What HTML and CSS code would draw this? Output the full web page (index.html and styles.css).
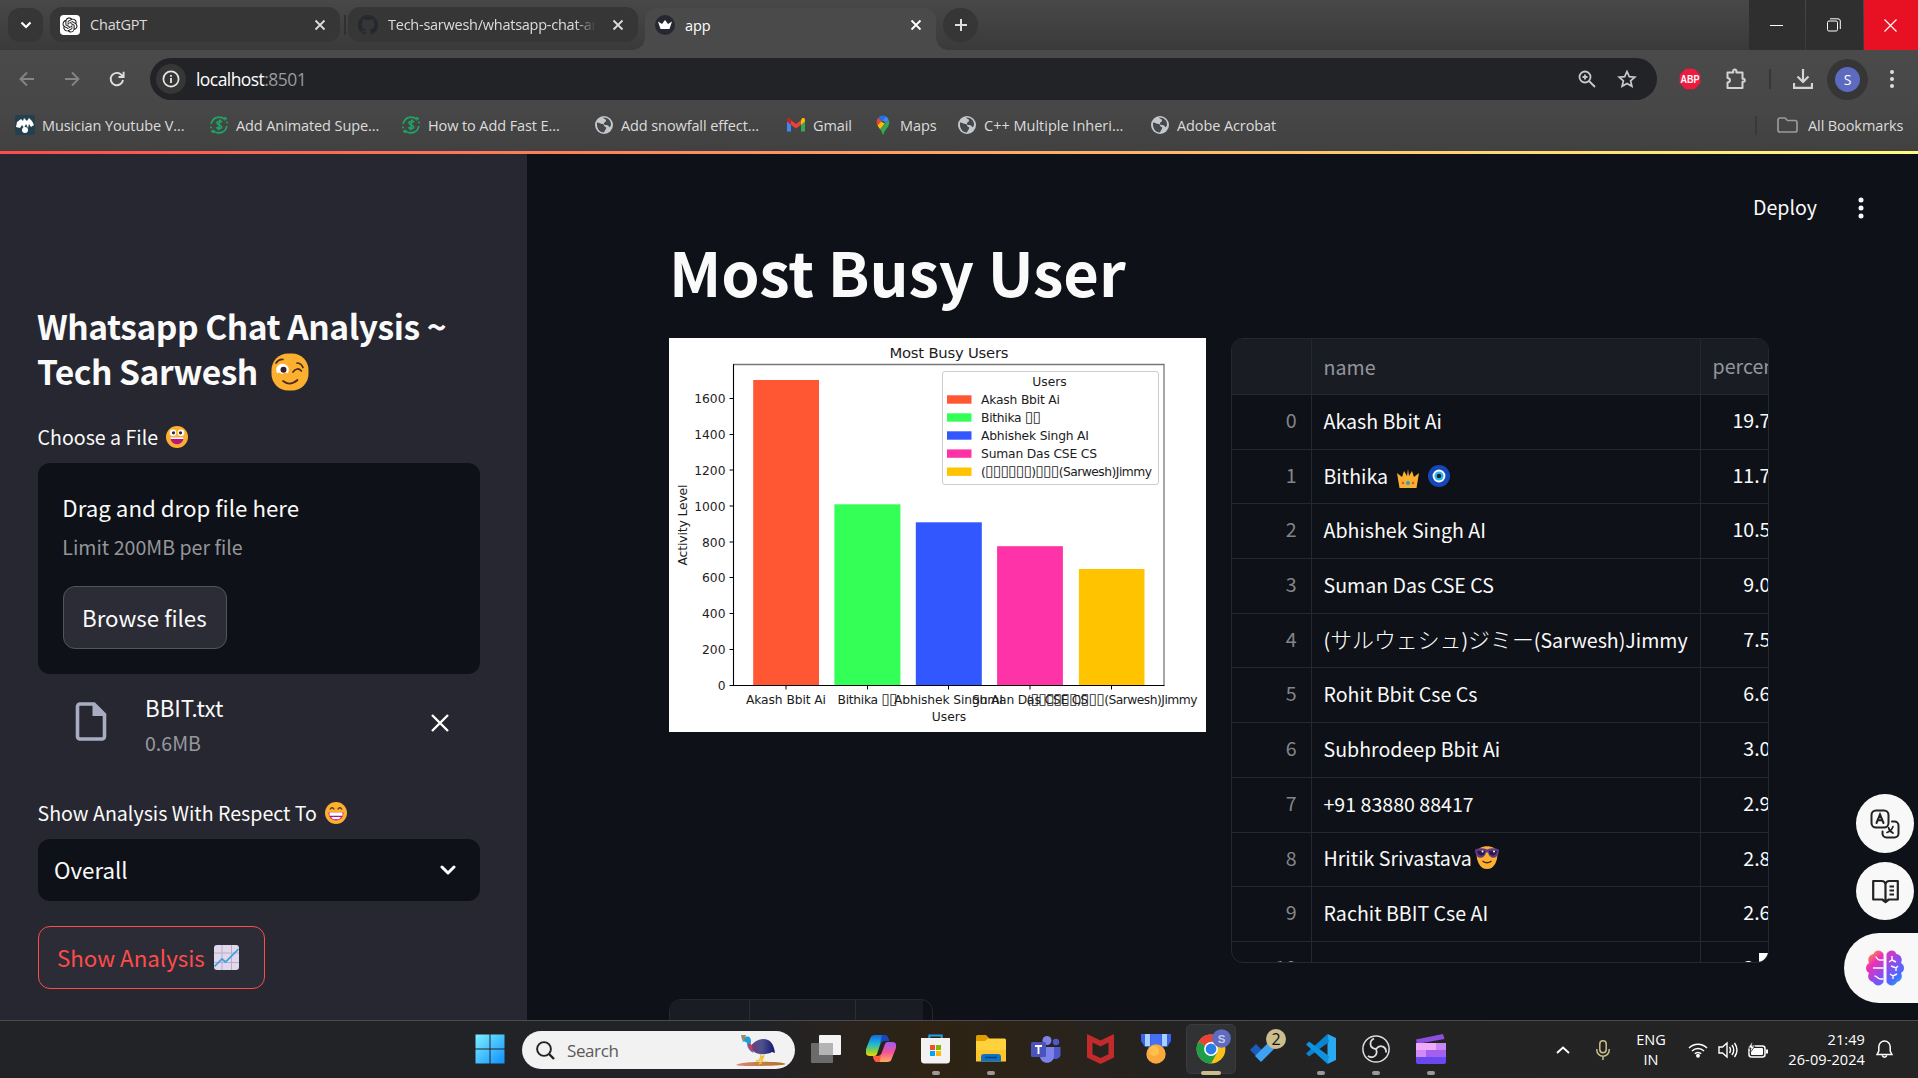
FILE: index.html
```html
<!DOCTYPE html>
<html lang="en">
<head>
<meta charset="utf-8">
<title>app</title>
<link rel="stylesheet" href="styles.css">
</head>
<body>
<svg class="defs" aria-hidden="true">
  <defs>
    <symbol id="i-close" viewBox="0 0 12 12"><path d="M1.5 1.5l9 9M10.5 1.5l-9 9" fill="none" stroke="currentColor" stroke-width="1.8"/></symbol>
    <symbol id="i-globe" viewBox="0 0 20 20"><circle cx="10" cy="10" r="9" fill="#c4c7cc"/><path d="M3 7.5c2.500 0 3.500 1.500 5.500 1.500s1 2.500 3 3-.5 3-1.500 5.500C5 17.500 2.500 13 3 7.500zM9 2.500c1 2 3 1 3 3s-2.500 1.500-2 3.500 4 .5 5 2.500 2-1 2-2.500C17 5 13 2 9 2.500z" fill="#46484a"/></symbol>
    <symbol id="i-seo" viewBox="0 0 20 20"><g fill="none" stroke="#1fa463" stroke-width="1.700"><path d="M15.500 4.200A8 8 0 0 0 2.200 9"/><path d="M4.500 15.800A8 8 0 0 0 17.800 11"/><path d="M13 7.200c-1-1.500-5-1.300-5 .7 0 2.300 4.600 1.800 4.600 4 0 2.200-4.200 2-5.300.4M11 4.500l-1.500 11"/></g><path d="M15 1.500l3.500 2-3 2.500zM5 18.500l-3.500-2 3-2.500z" fill="#1fa463"/><circle cx="18" cy="7.500" r="1" fill="#1fa463"/><circle cx="2" cy="12.500" r="1" fill="#1fa463"/></symbol>
  </defs>
</svg>

<header class="browser">
  <div class="tabstrip">
    <button class="tab-search"><svg width="12" height="8" viewBox="0 0 12 8"><path d="M1.500 1.500L6 6l4.500-4.500" fill="none" stroke="#fff" stroke-width="2.200"/></svg></button>
    <div class="tab">
      <svg class="fav" width="20" height="20" viewBox="-4 -4 32 32"><rect x="-4" y="-4" width="32" height="32" rx="6" fill="#fff"/><path fill="#111" d="M22.2819 9.8211a5.9847 5.9847 0 0 0-.5157-4.9108 6.0462 6.0462 0 0 0-6.5098-2.9A6.0651 6.0651 0 0 0 4.9807 4.1818a5.9847 5.9847 0 0 0-3.9977 2.9 6.0462 6.0462 0 0 0 .7427 7.0966 5.98 5.98 0 0 0 .511 4.9107 6.051 6.051 0 0 0 6.5146 2.9001A5.9847 5.9847 0 0 0 13.2599 24a6.0557 6.0557 0 0 0 5.7718-4.2058 5.9894 5.9894 0 0 0 3.9977-2.9001 6.0557 6.0557 0 0 0-.7475-7.0729zm-9.022 12.6081a4.4755 4.4755 0 0 1-2.8764-1.0408l.1419-.0804 4.7783-2.7582a.7948.7948 0 0 0 .3927-.6813v-6.7369l2.02 1.1686a.071.071 0 0 1 .038.052v5.5826a4.504 4.504 0 0 1-4.4945 4.4944zm-9.6607-4.1254a4.4708 4.4708 0 0 1-.5346-3.0137l.142.0852 4.783 2.7582a.7712.7712 0 0 0 .7806 0l5.8428-3.3685v2.3324a.0804.0804 0 0 1-.0332.0615L9.74 19.9502a4.4992 4.4992 0 0 1-6.1408-1.6464zM2.3408 7.8956a4.485 4.485 0 0 1 2.3655-1.9728V11.6a.7664.7664 0 0 0 .3879.6765l5.8144 3.3543-2.0201 1.1685a.0757.0757 0 0 1-.071 0l-4.8303-2.7865A4.504 4.504 0 0 1 2.3408 7.872zm16.5963 3.8558L13.1038 8.364 15.1192 7.2a.0757.0757 0 0 1 .071 0l4.8303 2.7913a4.4944 4.4944 0 0 1-.6765 8.1042v-5.6772a.79.79 0 0 0-.407-.667zm2.0107-3.0231l-.142-.0852-4.7735-2.7818a.7759.7759 0 0 0-.7854 0L9.409 9.2297V6.8974a.0662.0662 0 0 1 .0284-.0615l4.8303-2.7866a4.4992 4.4992 0 0 1 6.6802 4.66zM8.3065 12.863l-2.02-1.1638a.0804.0804 0 0 1-.038-.0567V6.0742a4.4992 4.4992 0 0 1 7.3757-3.4537l-.142.0805L8.704 5.459a.7948.7948 0 0 0-.3927.6813zm1.0976-2.3654l2.602-1.4998 2.6069 1.4998v2.9994l-2.5974 1.4997-2.6067-1.4997Z"/></svg>
      <span class="t tab-t1">ChatGPT</span>
      <svg class="x" width="12" height="12"><use href="#i-close"/></svg>
    </div>
    <i class="tab-sep"></i>
    <div class="tab tab-gh">
      <svg class="fav" width="20" height="20" viewBox="0 0 16 16"><path fill="#24292f" d="M8 0C3.580 0 0 3.580 0 8c0 3.540 2.290 6.530 5.470 7.590.4.070.55-.17.55-.38v-1.490c-2.010.37-2.530-.49-2.690-.94-.09-.23-.48-.94-.82-1.130-.28-.15-.68-.52-.01-.53.63-.01 1.080.58 1.230.82.72 1.210 1.870.87 2.330.66.070-.52.28-.87.51-1.070-1.780-.2-3.640-.89-3.640-3.950 0-.87.31-1.590.82-2.150-.08-.2-.36-1.020.08-2.120 0 0 .67-.21 2.200.82a7.600 7.600 0 0 1 4 0c1.530-1.040 2.200-.82 2.200-.82.44 1.100.16 1.920.08 2.120.51.56.82 1.270.82 2.150 0 3.070-1.870 3.750-3.650 3.950.29.25.54.73.54 1.480v2.200c0 .21.15.46.55.38A8 8 0 0 0 16 8c0-4.420-3.580-8-8-8z"/></svg>
      <span class="t tab-t2">Tech-sarwesh/whatsapp-chat-analysis</span>
      <svg class="x" width="12" height="12"><use href="#i-close"/></svg>
    </div>
    <div class="tab tab-active">
      <svg class="fav" width="20" height="20" viewBox="0 0 20 20"><circle cx="10" cy="10" r="10" fill="#262730"/><path d="M3 6.500l4 2.500 3-4 3 4 4-2.500-2.500 7.500h-9z" fill="#fff"/></svg>
      <span class="t tab-t3">app</span>
      <svg class="x" width="12" height="12"><use href="#i-close"/></svg>
    </div>
    <button class="tab-new"><svg width="14" height="14" viewBox="0 0 14 14"><path d="M7 1v12M1 7h12" stroke="#dedede" stroke-width="2"/></svg></button>
    <div class="winctl">
      <span><svg width="13" height="13" viewBox="0 0 13 13"><path d="M0 6.500h13" stroke="#fff"/></svg></span>
      <span><svg width="14" height="14" viewBox="0 0 14 14" fill="none" stroke="#fff"><rect x=".5" y="3" width="10" height="10" rx="1.500"/><path d="M3 .8h8A2.300 2.300 0 0 1 13.300 3v8"/></svg></span>
      <span class="close"><svg width="13" height="13" viewBox="0 0 13 13"><path d="M.5.5l12 12M12.500.5l-12 12" stroke="#fff" stroke-width="1.100"/></svg></span>
    </div>
  </div>

  <div class="toolbar">
    <svg class="nav dim" width="16" height="16" viewBox="0 0 16 16"><path d="M15 8H2M8 1.500L1.500 8 8 14.500" fill="none" stroke="currentColor" stroke-width="1.900"/></svg>
    <svg class="nav dim" width="16" height="16" viewBox="0 0 16 16"><path d="M1 8h13M8 1.500L14.500 8 8 14.500" fill="none" stroke="currentColor" stroke-width="1.900"/></svg>
    <svg class="nav" width="16" height="16" viewBox="0 0 16 16"><path d="M14 9a6.200 6.200 0 1 1-1.600-5.200l1.600 1.700M14.600.8v5.200H9.500" fill="none" stroke="#dedede" stroke-width="1.900"/></svg>
    <div class="omnibox">
      <span class="info"><svg width="18" height="18" viewBox="0 0 18 18"><circle cx="9" cy="9" r="7.600" fill="none" stroke="#e6e6e6" stroke-width="1.700"/><path d="M9 8v5M9 5v1.700" stroke="#e6e6e6" stroke-width="1.800"/></svg></span>
      <span class="t url">localhost<em>:8501</em></span>
      <svg class="zoomi" width="18" height="18" viewBox="0 0 18 18" fill="none" stroke="#c9c9c9" stroke-width="1.800"><circle cx="7" cy="7" r="5.500"/><path d="M11 11l6 6M7 4.500v5M4.500 7h5"/></svg>
      <svg width="20" height="20" viewBox="0 0 20 20"><path d="M10 2.500l2.300 5.100 5.500.5-4.200 3.700 1.300 5.500L10 14.400l-4.900 2.900 1.300-5.500-4.200-3.700 5.500-.5z" fill="none" stroke="#c9c9c9" stroke-width="1.700"/></svg>
    </div>
    <div class="ext">
      <svg class="abp" width="22" height="22" viewBox="0 0 22 22"><path d="M6.700.8h8.600l6 6v8.400l-6 6H6.700l-6-6V6.800z" fill="#f0193f"/><text x="11" y="14.800" text-anchor="middle" textLength="19" lengthAdjust="spacingAndGlyphs">ABP</text></svg>
      <svg class="puz" width="22" height="22" viewBox="0 0 22 22"><path d="M2.500 4.500h5.700V3a1.600 1.600 0 0 1 3.200 0v1.500h6.100v6.200h.8a1.500 1.500 0 0 1 0 3h-.8v6.300h-15v-5.500c3.300-.3 3.300-4.200 0-4.500z" fill="none" stroke="#d4d4d4" stroke-width="2" stroke-linejoin="round"/></svg>
      <i class="tb-sep"></i>
      <svg class="dl" width="20" height="20" viewBox="0 0 20 20"><path d="M10 0v12M4.500 7.500L10 13l5.500-5.500M1 14v4.800h18V14" fill="none" stroke="#d4d4d4" stroke-width="2.200"/></svg>
      <span class="avatar"><b>S</b></span>
      <svg class="menu" width="4" height="18" viewBox="0 0 4 18" fill="#dedede"><circle cx="2" cy="2" r="2"/><circle cx="2" cy="9" r="2"/><circle cx="2" cy="16" r="2"/></svg>
    </div>
  </div>

  <nav class="bookmarks">
    <div class="bm"><svg width="20" height="20" viewBox="0 0 20 20"><rect width="20" height="20" rx="2" fill="#23404f"/><path d="M1 12l1-5 4-3 2 2 1-3 3 3 2-3 3 3 2 4-3 2-2-3-1 4-2-4-2 4-2-3-2 3z" fill="#fff"/><circle cx="10" cy="15" r="3" fill="#fff"/></svg><span class="t">Musician Youtube V...</span></div>
    <div class="bm"><svg width="20" height="20"><use href="#i-seo"/></svg><span class="t">Add Animated Supe...</span></div>
    <div class="bm"><svg width="20" height="20"><use href="#i-seo"/></svg><span class="t">How to Add Fast E...</span></div>
    <div class="bm"><svg width="20" height="20"><use href="#i-globe"/></svg><span class="t">Add snowfall effect...</span></div>
    <div class="bm"><svg width="20" height="20" viewBox="0 0 20 20"><path d="M1 5v11.500h4V9.500L1 6z" fill="#4285f4"/><path d="M19 5v11.500h-4V9.500l4-3.500z" fill="#34a853"/><path d="M15 5.300V9.700L19 6.500V5c0-2-2-2.500-3.200-1.500z" fill="#fbbc04"/><path d="M5 9.700V5.300l5 3.800 5-3.800v4.400l-5 3.800z" fill="#ea4335"/><path d="M1 5v1.500l4 3.200V5.300L4.200 3.500C3 2.500 1 3 1 5z" fill="#c5221f"/></svg><span class="t">Gmail</span></div>
    <div class="bm"><svg width="20" height="20" viewBox="0 0 20 20"><path d="M10 .5a6.300 6.300 0 0 0-5 2.400l4 3.300 4-4.900a6.500 6.500 0 0 0-3-.8z" fill="#1a73e8"/><path d="M5 2.900c-2 2.400-1.500 5.800-.4 7.700L9 6.200z" fill="#ea4335"/><path d="M13 1.300L8.500 6.700a2.300 2.300 0 0 1 3.200 3.300l4-4.800A6.200 6.200 0 0 0 13 1.300z" fill="#4285f4"/><path d="M4.600 10.600c.7 1.400 1.700 2.500 2.600 3.700L12 8.500 8 6.800z" fill="#fbbc04"/><path d="M15.700 5.200L7.200 14.300c1.200 1.700 1.900 2.900 2.200 4.600.2.900 1 .9 1.200 0 .8-4.200 5.700-6 5.700-12.200 0-.5-.3-1-.6-1.500z" fill="#34a853"/></svg><span class="t">Maps</span></div>
    <div class="bm bm-wide"><svg width="20" height="20"><use href="#i-globe"/></svg><span class="t">C++ Multiple Inheri...</span></div>
    <div class="bm"><svg width="20" height="20"><use href="#i-globe"/></svg><span class="t">Adobe Acrobat</span></div>
    <i class="bm-sep"></i>
    <div class="bm all"><svg width="21" height="16" viewBox="0 0 21 16"><path d="M1 3a2 2 0 0 1 2-2h5l2.500 2.500H18a2 2 0 0 1 2 2V13a2 2 0 0 1-2 2H3a2 2 0 0 1-2-2z" fill="none" stroke="#9a9a9a" stroke-width="1.700"/></svg><span class="t">All Bookmarks</span></div>
  </nav>
</header>

<div class="decoration"></div>

<div class="app">
  <aside class="sidebar">
    <h2><span class="t h2a">Whatsapp Chat Analysis ~</span><br><span class="t h2b">Tech Sarwesh</span>
      <svg class="emo-title" width="38" height="38" viewBox="0 0 38 38"><rect x=".5" y=".5" width="37" height="37" rx="16.500" fill="#fdb02f"/><circle cx="11.500" cy="17" r="6.300" fill="#fff"/><path d="M5 21l3-1.500 3 1.500 3-1.500 4 1v4H5z" fill="#fdb02f"/><circle cx="12.500" cy="16.800" r="3" fill="#3b1f2b"/><path d="M5 10q3-4 7-3.500M26 10q4 0 6 4.500M22 19q4-5.500 8.500-1M12 28q7 5.500 14.500-1" fill="none" stroke="#4a2a20" stroke-width="1.700" stroke-linecap="round"/></svg></h2>
    <label class="lbl"><span class="t">Choose a File</span>
      <svg width="22" height="22" viewBox="0 0 22 22"><circle cx="11" cy="11" r="11" fill="#fdb02f"/><circle cx="7" cy="6.800" r="3.300" fill="#fff"/><circle cx="15" cy="6.800" r="3.300" fill="#fff"/><circle cx="7.500" cy="6.800" r="1.600" fill="#3b1f2b"/><circle cx="14.500" cy="6.800" r="1.600" fill="#3b1f2b"/><path d="M4.500 11.500h13c0 9-13 9-13 0z" fill="#b8157e"/><path d="M4.500 11.300h13v1.700h-13z" fill="#fff"/></svg></label>
    <section class="dropzone">
      <p class="dz-main"><span class="t">Drag and drop file here</span></p>
      <p class="dz-sub"><span class="t">Limit 200MB per file</span></p>
      <button class="btn browse"><span class="t">Browse files</span></button>
    </section>
    <div class="file">
      <svg class="file-ico" width="32" height="39" viewBox="0 0 32 39"><path d="M2.500 4.500a2.500 2.500 0 0 1 2.500-2.500h14l10.500 10.500v22A2.500 2.500 0 0 1 27 37H5a2.500 2.500 0 0 1-2.500-2.500z" fill="none" stroke="#a9adc1" stroke-width="3.600"/><path d="M17.500 2v12h12z" fill="#a9adc1"/></svg>
      <div class="file-meta"><p class="f1"><span class="t">BBIT.txt</span></p><p class="f2"><span class="t">0.6MB</span></p></div>
      <svg class="file-x" width="18" height="18" viewBox="0 0 18 18"><path d="M1 1l16 16M17 1L1 17" stroke="#fff" stroke-width="2.400"/></svg>
    </div>
    <label class="lbl lbl2"><span class="t">Show Analysis With Respect To</span>
      <svg width="22" height="22" viewBox="0 0 22 22"><circle cx="11" cy="11" r="11" fill="#fdb02f"/><path d="M5 7.500q2-3.500 4.300 0M12.700 7.500q2-3.500 4.300 0" fill="none" stroke="#5b3420" stroke-width="1.300"/><path d="M3.500 10.500h15c0 10.500-15 10.500-15 0z" fill="#b8157e"/><path d="M4.500 10.500h13v3.200h-13zM6 15h10l-2 2.300H8z" fill="#fff"/></svg></label>
    <div class="select"><span class="t">Overall</span><svg width="16" height="11" viewBox="0 0 16 11"><path d="M2 2l6 6 6-6" fill="none" stroke="#fff" stroke-width="3" stroke-linecap="round" stroke-linejoin="round"/></svg></div>
    <button class="btn show"><span class="t">Show Analysis</span>
      <svg width="25" height="25" viewBox="0 0 25 25"><rect width="25" height="25" rx="3" fill="#e1d8ec"/><path d="M8 0v25M17.500 0v25M0 8h25M0 17.500h25" stroke="#b9adc8" stroke-width="1"/><path d="M.5 21.500L8 14l3.500 3L24.500 4" fill="none" stroke="#3f9fe0" stroke-width="1.700"/></svg></button>
  </aside>

  <main class="main">
    <div class="topbar"><span class="t">Deploy</span><svg width="6" height="22" viewBox="0 0 6 22" fill="#fafafa"><circle cx="3" cy="3" r="2.500"/><circle cx="3" cy="11" r="2.500"/><circle cx="3" cy="19" r="2.500"/></svg></div>
    <h1><span class="t">Most Busy User</span></h1>
    <div class="cols">
      <svg class="chart" width="537" height="394" viewBox="0 0 537 394">
        <rect width="537" height="394" fill="#fff"/>
        <text class="ct" x="280" y="20" text-anchor="middle" textLength="119">Most Busy Users</text>
        <g stroke="#000" stroke-width="1"><path d="M60.500 347.500h4M60.500 311.500h4M60.500 275.500h4M60.500 239.500h4M60.500 204h4M60.500 168h4M60.500 132h4M60.500 96.500h4M60.500 60.500h4"/><path d="M117 347.500v4M198.500 347.500v4M279.500 347.500v4M361 347.500v4M442.500 347.500v4"/></g>
        <rect x="84.200" y="42" width="65.800" height="305.500" fill="#ff5733"/>
        <rect x="165.400" y="166.300" width="66" height="181.200" fill="#33ff57"/>
        <rect x="246.800" y="184.300" width="66" height="163.200" fill="#3357ff"/>
        <rect x="328.100" y="208.200" width="65.800" height="139.300" fill="#ff33a8"/>
        <rect x="409.900" y="231" width="65.600" height="116.500" fill="#ffc300"/>
        <path d="M64.500 26.500h430.500v321" fill="none" stroke="#777" stroke-width="1.300"/><path d="M64.500 26v321.500H495.500" fill="none" stroke="#000" stroke-width="1.100"/>
        <g text-anchor="end"><text x="56.500" y="352">0</text><text x="56.500" y="316">200</text><text x="56.500" y="280">400</text><text x="56.500" y="244">600</text><text x="56.500" y="208.500">800</text><text x="56.500" y="172.500">1000</text><text x="56.500" y="136.500">1200</text><text x="56.500" y="101">1400</text><text x="56.500" y="65">1600</text></g>
        <g text-anchor="middle">
          <text x="117" y="366" textLength="80">Akash Bbit Ai</text>
          <text x="198.500" y="366" textLength="60">Bithika <tspan class="tofu">▯▯</tspan></text>
          <text x="279.500" y="366" textLength="109">Abhishek Singh AI</text>
          <text x="361" y="366" textLength="116">Suman Das CSE CS</text>
          <text x="443" y="366" textLength="171">(<tspan class="tofu">▯▯▯▯▯▯</tspan>)<tspan class="tofu">▯▯▯</tspan>(Sarwesh)Jimmy</text>
          <text x="280" y="383">Users</text>
          <text transform="translate(18 187) rotate(-90)" textLength="81">Activity Level</text>
        </g>
        <rect x="273.500" y="33.500" width="216" height="113" rx="2.500" fill="#fff" fill-opacity=".8" stroke="#ccc"/>
        <text x="380.500" y="48" text-anchor="middle">Users</text>
        <rect x="278" y="57.300" width="24.500" height="8.400" fill="#ff5733"/><rect x="278" y="75.300" width="24.500" height="8.400" fill="#33ff57"/><rect x="278" y="93.300" width="24.500" height="8.400" fill="#3357ff"/><rect x="278" y="111.400" width="24.500" height="8.400" fill="#ff33a8"/><rect x="278" y="129.500" width="24.500" height="8.400" fill="#ffc300"/>
        <text x="312" y="66" textLength="79">Akash Bbit Ai</text><text x="312" y="84" textLength="60">Bithika <tspan class="tofu">▯▯</tspan></text><text x="312" y="102" textLength="108">Abhishek Singh AI</text><text x="312" y="120" textLength="116">Suman Das CSE CS</text><text x="312" y="138" textLength="171">(<tspan class="tofu">▯▯▯▯▯▯</tspan>)<tspan class="tofu">▯▯▯</tspan>(Sarwesh)Jimmy</text>
      </svg>

      <div class="df">
        <div class="row head"><span></span><span><b class="t">name</b></span><span>percentage</span></div>
        <div class="row"><span>0</span><span><b class="t">Akash Bbit Ai</b></span><span>19.7</span></div>
        <div class="row"><span>1</span><span>Bithika
          <svg class="crown" width="22" height="20" viewBox="0 0 22 20"><path d="M0 5l5 4 2-6 3 5 1-7 1 7 3-5 2 6 5-4-2.500 15h-17z" fill="#fdb02f"/><circle cx="11" cy="15" r="2" fill="#1aa7c8"/><circle cx="6" cy="15" r="1.300" fill="#e0503a"/><circle cx="16" cy="15" r="1.300" fill="#e0503a"/></svg>
          <svg class="nazar" width="22" height="22" viewBox="0 0 22 22"><circle cx="11" cy="11" r="11" fill="#1546ba"/><circle cx="11" cy="11" r="6.400" fill="#fff"/><circle cx="11" cy="11" r="4.600" fill="#26b6ef"/><circle cx="11" cy="11" r="2.300" fill="#222"/></svg></span><span>11.7</span></div>
        <div class="row"><span>2</span><span><b class="t">Abhishek Singh AI</b></span><span>10.5</span></div>
        <div class="row"><span>3</span><span><b class="t">Suman Das CSE CS</b></span><span>9.0</span></div>
        <div class="row"><span>4</span><span><b class="t">(<i class="jp">サルウェシュ</i>)<i class="jp">ジミー</i>(Sarwesh)Jimmy</b></span><span>7.5</span></div>
        <div class="row"><span>5</span><span><b class="t">Rohit Bbit Cse Cs</b></span><span>6.6</span></div>
        <div class="row"><span>6</span><span><b class="t">Subhrodeep Bbit Ai</b></span><span>3.0</span></div>
        <div class="row"><span>7</span><span><b class="t">+91 83880 88417</b></span><span>2.9</span></div>
        <div class="row"><span>8</span><span><b class="t">Hritik Srivastava</b><svg class="cool" width="24" height="23" viewBox="0 0 24 23"><path d="M1.500 7C2-2 22-2 22.500 7c0 8-3 16-10.500 16S1.500 15 1.500 7z" fill="#fdb02f"/><path d="M0 3.500q6-2.500 12 0 6-2.500 12 0c0 11-10 10-11 3h-2c-1 7-11 8-11-3z" fill="#5b3a86"/><path d="M2 5h8c0 6-7 6-8 0zM14 5h8c-1 6-8 6-8 0z" fill="#2c1745"/><circle cx="7.500" cy="5.500" r="1" fill="#fff"/><circle cx="19" cy="5.500" r="1" fill="#fff"/><path d="M7.500 15q4.500 3.500 9 0" fill="none" stroke="#4a2a20" stroke-width="1.400"/></svg></span><span>2.8</span></div>
        <div class="row"><span>9</span><span><b class="t">Rachit BBIT Cse AI</b></span><span>2.6</span></div>
        <div class="row"><span>10</span><span>+91 89710 45890</span><span>2.5</span></div>
        <i class="corner"></i>
      </div>
    </div>
    <div class="df2"><span></span><span></span><span></span></div>
  </main>

  <div class="float f-tr"><svg width="30" height="30" viewBox="0 0 30 30" fill="none" stroke="#222" stroke-width="2" stroke-linecap="round"><rect x="1.500" y="1.500" width="17" height="17" rx="4.500"/><path d="M6.500 14l3.500-8.500L13.500 14M7.500 11.300h5M22 12.500h2.500a4 4 0 0 1 4 4v8a4 4 0 0 1-4 4h-8a4 4 0 0 1-4-4V22.500"/><path d="M17 23.500c3-1 5-3 6-6M18.500 18.500c.5 2.500 2.500 4.500 4.500 5.500" stroke-width="1.700"/></svg></div>
  <div class="float f-bk"><svg width="27" height="25" viewBox="0 0 27 25" fill="none" stroke="#222" stroke-width="2.200" stroke-linejoin="round"><path d="M1.200 2h8.300a4 4 0 0 1 4 3 4 4 0 0 1 4-3h8.300v18.500h-9l-3.300 2.500-3.300-2.500h-9zM13.500 5v18M17.500 7.500h4.500M17.500 11.500h4.500M17.500 15.500h4.500"/></svg></div>
  <div class="float f-br"><svg width="38" height="36" viewBox="0 0 38 36"><defs><linearGradient id="br" x1="0" y1="0" x2="1" y2="1"><stop offset=".05" stop-color="#ff9d2a"/><stop offset=".28" stop-color="#ee2fb8"/><stop offset=".55" stop-color="#8a4df0"/><stop offset=".8" stop-color="#4570ff"/><stop offset="1" stop-color="#1fc4ff"/></linearGradient></defs><path d="M17.500 4v28c-2 4-8 5-10.500 0C2.500 31 1 26.500 3 23c-4-2-4-8 0-10C1 8.500 3.500 4.500 7.500 4c2-5 8-4.500 10 0zM20.500 4v28c2 4 8 5 10.500 0 4.500-1 6-5.500 4-9 4-2 4-8 0-10 2-4.500-.5-8.500-4.500-9-2-5-8-4.500-10 0z" fill="url(#br)"/><path d="M17.500 10h-4c-3 0-2-3-4-3M17.500 18H7M17.500 29h-3c-3 0-3-3-6-3M26 6v4l-3 2M26 10l4 2M25 16l5 2 2-2M30 18v3M24 24l3 2 4-2M27 26v3" fill="none" stroke="#fff" stroke-width="1.400"/></svg></div>
</div>

<footer class="taskbar">
  <div class="slot"><svg width="30" height="30" viewBox="0 0 30 30"><defs><linearGradient id="wg" x1="0" y1="0" x2="1" y2="1"><stop offset="0" stop-color="#7df0ff"/><stop offset="1" stop-color="#0f8fff"/></linearGradient></defs><path d="M.5.5h14v14H.5zM15.500.5h14v14h-14zM.5 15.500h14v14H.5zM15.500 15.500h14v14h-14z" fill="url(#wg)"/></svg></div>
  <div class="search">
    <svg width="19" height="19" viewBox="0 0 19 19"><circle cx="8" cy="8" r="6.900" fill="none" stroke="#222" stroke-width="1.900"/><path d="M13 13l5 5" stroke="#222" stroke-width="2.400"/></svg>
    <span class="t srch">Search</span>
    <svg class="bird" width="51" height="32" viewBox="0 0 51 32"><defs><linearGradient id="sand" x1="0" x2="1"><stop offset="0" stop-color="#d58a73"/><stop offset="1" stop-color="#b3701f"/></linearGradient><linearGradient id="bd" x1="0" x2="1"><stop offset="0" stop-color="#7a3a6e"/><stop offset=".5" stop-color="#4b5190"/><stop offset="1" stop-color="#17166a"/></linearGradient></defs><path d="M1 30c6-4 44-4 50-1-2 2-46 3-50 1z" fill="url(#sand)"/><path d="M26 20l-1 5-4 1M29 20l-3 8-2 1M27 21v6" stroke="#f2c230" stroke-width="1.500" fill="none"/><path d="M14 10c3 3 3-5 14-6 8 0 11 6 12 14l-3-1c-5 3-19 5-23-7z" fill="url(#bd)"/><path d="M9 3c4-3 7-1 7 3 0 3-1 4 0 6 1 3 2 5 3 6-5-2-7-6-7-10-1-1-3-2-5-1z" fill="#1c9fd4"/><path d="M13 8c0 4 2 8 5 9l-1-7z" fill="#c83a6a"/><path d="M6 0h5l-1 4-3 1z" fill="#a48860"/></svg>
  </div>
  <div class="slot"><svg width="30" height="28" viewBox="0 0 30 28"><rect x="8" width="22" height="20" rx="1" fill="#f4f4f4"/><rect y="8" width="22" height="20" rx="1" fill="#6b6b6b"/><path d="M8 8h14v12H8z" fill="#b4b4b4"/></svg></div>
  <div class="slot"><svg width="30" height="28" viewBox="0 0 30 28"><defs><linearGradient id="c1" x1="0" y1="0" x2="0" y2="1"><stop offset="0" stop-color="#1a66e0"/><stop offset=".4" stop-color="#19b5d8"/><stop offset=".75" stop-color="#7ed04a"/><stop offset="1" stop-color="#ffd000"/></linearGradient><linearGradient id="c2" x1="0" y1="0" x2="0" y2="1"><stop offset="0" stop-color="#a15cf5"/><stop offset=".5" stop-color="#f0529a"/><stop offset="1" stop-color="#ffad5c"/></linearGradient></defs><path d="M9 0h9c3 0 4 2 5 6h-5c-2 0-3 1-4 4l-3 9c-1 2-2 2-4 2H4c-4 0-5-3-4-7L4 4c1-3 2-4 5-4z" fill="url(#c1)"/><path d="M16 0h2c3 0 4 2 5 6h-5c-2 0-3 1-4 3z" fill="#1747c0"/><path d="M21 27h-9c-3 0-4-2-5-6h5c2 0 3-1 4-4l3-8c1-2 2-2 4-2h3c4 0 5 3 4 6l-4 10c-1 3-2 4-5 4z" fill="url(#c2)"/><path d="M14 27h-2c-3 0-4-2-5-6h5c1 0 2 0 3-2z" fill="#ff5a3c"/></svg></div>
  <div class="slot run"><svg width="29" height="30" viewBox="0 0 29 30"><path d="M8.300 5V1.500h12.400V5" fill="none" stroke="#1ca3ec" stroke-width="2"/><path d="M0 4h29v22a3.500 3.500 0 0 1-3.500 3.500h-22A3.500 3.500 0 0 1 0 26z" fill="#f2f2f2"/><path d="M9 11h5v5H9z" fill="#f25022"/><path d="M15 11h5v5h-5z" fill="#7fba00"/><path d="M9 17h5v5H9z" fill="#00a4ef"/><path d="M15 17h5v5h-5z" fill="#ffb900"/></svg></div>
  <div class="slot run"><svg width="30" height="28" viewBox="0 0 30 28"><path d="M0 1.500A1.500 1.500 0 0 1 1.500 0H10l3 3v3H0z" fill="#e19d00"/><path d="M0 6h9l3-2.500h16.500A1.500 1.500 0 0 1 30 5v21H0z" fill="#ffd23d"/><path d="M0 15h30v11.500H0z" fill="#fdc62c"/><path d="M5 26.500V22a3 3 0 0 1 3-3h14a3 3 0 0 1 3 3v4.500z" fill="#0c72c6"/><path d="M9 22.500h12" stroke="#053f7a" stroke-width="1.500"/></svg></div>
  <div class="slot"><svg width="30" height="27" viewBox="0 0 30 27"><circle cx="16" cy="4.500" r="4.500" fill="#7b83eb"/><circle cx="25" cy="6" r="3.200" fill="#5059c9"/><path d="M20 11h9.500v8a5 5 0 0 1-8 3z" fill="#5059c9"/><path d="M9 11h14v9c0 9-14 9-14 0z" fill="#7b83eb"/><rect y="6" width="15" height="15" rx="1.500" fill="#4b53bc"/><path d="M4 10h7M7.500 10v8" stroke="#fff" stroke-width="1.900"/></svg></div>
  <div class="slot"><svg width="27" height="30" viewBox="0 0 27 30"><path d="M0 0l13.500 6.500L27 0v23.500L13.500 30 0 23.500zM5.500 8.500v11.700l8 3.900 8-3.900V8.500l-8 4z" fill="#c32a2c" fill-rule="evenodd"/></svg></div>
  <div class="slot"><svg width="30" height="30" viewBox="0 0 30 30"><path d="M0 0h30v7l-4 6H4L0 7z" fill="#3b62e8"/><path d="M4 0h5v12H4zM21 0h5v12h-5z" fill="#a9d0ff"/><path d="M10 0h10v12H10z" fill="#4470f5"/><circle cx="15" cy="20" r="9.700" fill="#fba93c"/><circle cx="13" cy="17" r="5" fill="#ffc04e"/></svg></div>
  <div class="slot tile"><svg width="50" height="50" viewBox="0 0 50 50"><circle cx="25" cy="25" r="15" fill="#fbc116"/><path d="M25 25L12 17.500A15 15 0 0 1 38 17.500H25z" fill="#ea4335"/><path d="M12 17.500A15 15 0 0 0 25 40l6.500-11.300L25 25z" fill="#1e9e48"/><circle cx="25" cy="25" r="7.200" fill="#fff"/><circle cx="25" cy="25" r="5.600" fill="#2b7de9"/><circle cx="36" cy="14" r="9.700" fill="#5f6bc0"/><text x="36" y="18.500" text-anchor="middle" class="badge-s">S</text></svg></div>
  <div class="slot"><svg class="todo" width="38" height="34" viewBox="0 0 38 34"><path d="M1 21l6-6 7 7-6 6z" fill="#1b5dbf"/><path d="M6 27L23 10l6 6-17 17z" fill="#3fa2f0"/><circle cx="27" cy="10" r="10" fill="#cbbd8e"/><text x="27" y="16" text-anchor="middle" class="badge-2">2</text></svg></div>
  <div class="slot run"><svg width="30" height="30" viewBox="0 0 30 30"><path d="M21.500 0L30 4v22l-8.500 4z" fill="#29a9f2"/><path d="M21.500 0L0 19.500l3 3L23 8z" fill="#0a85d1"/><path d="M21.500 30L0 10.500l3-3L23 22z" fill="#0f93e0"/></svg></div>
  <div class="slot run"><svg width="28" height="28" viewBox="0 0 28 28"><circle cx="14" cy="14" r="13.100" fill="#1a191b" stroke="#ddd" stroke-width="1.500"/><g fill="none" stroke="#ddd" stroke-width="1.800"><path d="M14 14C7 13 7 6 12 3.500"/><path d="M14 14C7 13 7 6 12 3.500" transform="rotate(120 14 14)"/><path d="M14 14C7 13 7 6 12 3.500" transform="rotate(240 14 14)"/></g></svg></div>
  <div class="slot run"><svg width="30" height="30" viewBox="0 0 30 30"><path d="M0 5.500L27 0l1.500 5L1 10z" fill="#8c4fe0"/><path d="M0 9h30v7H0z" fill="#c986f5"/><path d="M0 9h20v7H0z" fill="#efabfa"/><path d="M0 16h30v7H0z" fill="#a360ef"/><path d="M0 16h10v7H0z" fill="#d18bf7"/><path d="M0 23h30v5a2 2 0 0 1-2 2H2a2 2 0 0 1-2-2z" fill="#6a48f0"/></svg></div>

  <div class="tray">
    <svg class="t-ch" width="14" height="8" viewBox="0 0 14 8"><path d="M1 7l6-5.500L13 7" fill="none" stroke="#fff" stroke-width="1.900"/></svg>
    <svg class="t-mic" width="14" height="20" viewBox="0 0 14 20" fill="none" stroke="#c9bc8b" stroke-width="1.500"><rect x="3.800" y=".8" width="6.400" height="12" rx="3.200"/><path d="M.8 9v1a6.200 6.200 0 0 0 12.400 0V9M7 16.200V20"/></svg>
    <div class="lang"><span class="t">ENG</span><span class="t">IN</span></div>
    <svg class="t-wifi" width="20" height="16" viewBox="0 0 20 16" fill="none" stroke="#fff" stroke-width="1.500"><path d="M1 6a12.700 12.700 0 0 1 18 0M4 9a8.500 8.500 0 0 1 12 0M6.800 11.800a4.500 4.500 0 0 1 6.400 0"/><circle cx="10" cy="13.800" r="1.200" fill="#fff"/></svg>
    <svg class="t-snd" width="20" height="18" viewBox="0 0 20 18" fill="none" stroke="#fff" stroke-width="1.400"><path d="M1 6h3.500L9 2v14l-4.500-4H1zM11.500 6q2 3 0 6M14 4q3.500 5 0 10M16.500 2q5 7 0 14"/></svg>
    <svg class="t-bat" width="20" height="17" viewBox="0 0 20 17"><rect x="1" y="5" width="16" height="11" rx="2.500" fill="none" stroke="#fff" stroke-width="1.500"/><rect x="3" y="7" width="12" height="7" rx="1" fill="#fff"/><path d="M18 8.500h2v4h-2z" fill="#fff"/><path d="M4.500 0L0 7h3l-1 5 5-7H4z" fill="#fff" stroke="#222" stroke-width=".8"/></svg>
    <div class="clock"><span class="t">21:49</span><span class="t">26-09-2024</span></div>
    <svg class="t-bell" width="17" height="19" viewBox="0 0 17 19" fill="none" stroke="#fff" stroke-width="1.500"><path d="M8.500 1a5.700 5.700 0 0 1 5.700 5.700V11l1.700 3.500H1.100L2.800 11V6.700A5.700 5.700 0 0 1 8.500 1zM6.300 15.500a2.300 2.300 0 0 0 4.400 0"/></svg>
  </div>
</footer>
</body>
</html>
```
FILE: styles.css
```css
* { box-sizing: border-box; }
html, body { margin: 0; height: 100%; }
body {
  width: 1918px; height: 1078px; overflow: hidden;
  display: flex; flex-direction: column;
  background: #0e1117; color: #fafafa;
  font-family: "Noto Sans CJK JP", "Open Sans", sans-serif;
}
.defs { position: absolute; width: 0; height: 0; }
svg { display: block; flex: none; }
p, h1, h2 { margin: 0; }
button { border: 0; padding: 0; font: inherit; color: inherit; background: none; }
.t { white-space: nowrap; font-weight: inherit; }

/* browser window */
.browser { height: 151px; flex: none; font-family: "Open Sans", sans-serif; font-size: 14.5px; letter-spacing: -.1px; color: #dcdcdc; background: #454545; }
.tabstrip { height: 50px; display: flex; align-items: flex-start; background: linear-gradient(#484848, #3a3a3a); padding-left: 8px; }
.tab-search, .tab-new { width: 35px; height: 34px; margin-top: 8px; border-radius: 12px; background: #363636; display: flex; align-items: center; justify-content: center; }
.tab { height: 35px; margin-top: 7px; border-radius: 12px; background: #363636; display: flex; align-items: center; padding: 0 14px 0 10px; width: 290px; margin-left: 7px; }
.tab .x { margin-left: auto; color: #dcdcdc; }
.fav { margin-right: 10px; }
.tab-sep { width: 2px; height: 20px; margin: 15px 2px 0 4px; background: #303030; }
.tab-gh { margin-left: 0; }
.tab-t1 { letter-spacing: -.2px; }
.tab-t2 { width: 208px; letter-spacing: -.25px; overflow: hidden; -webkit-mask-image: linear-gradient(90deg, #000 90%, transparent); mask-image: linear-gradient(90deg, #000 90%, transparent); }
.tab-active { position: relative; height: 42px; margin: 8px 0 0 7px; background: #4a4a4a; border-radius: 12px 12px 0 0; padding-bottom: 8px; width: 291px; color: #fff; }
.tab-active .x { color: #fff; }
.tab-active::before, .tab-active::after { content: ""; position: absolute; bottom: 0; width: 12px; height: 12px; }
.tab-active::before { left: -12px; background: radial-gradient(circle at 0 0, transparent 11.5px, #4a4a4a 12px); }
.tab-active::after { right: -12px; background: radial-gradient(circle at 100% 0, transparent 11.5px, #4a4a4a 12px); }
.tab-new { margin-left: 7px; border-radius: 17px; }
.winctl { margin-left: auto; display: flex; gap: 1px; }
.winctl span { width: 56px; height: 50px; background: #2f2f2f; display: flex; align-items: center; justify-content: center; padding-right: 1px; }
.winctl span + span { width: 57px; }
.winctl .close { background: #e81123; width: 54px !important; }

.toolbar { height: 58px; display: flex; align-items: center; padding-left: 19px; background: linear-gradient(#4a4a4a, #474747); }
.nav { margin-right: 29px; }
.dim { color: #858585; }
.omnibox { width: 1507px; height: 42px; border-radius: 21px; background: #222327; display: flex; align-items: center; margin-left: -4px; padding: 0 20px 0 6px; }
.info { width: 30px; height: 30px; border-radius: 15px; background: #363636; display: flex; align-items: center; justify-content: center; }
.url { margin-left: 10px; font-size: 17.500px; letter-spacing: -.56px; color: #fff; }
.url em { font-style: normal; color: #9a9a9a; }
.zoomi { margin-left: auto; margin-right: 21px; }
.ext { display: flex; align-items: center; }
.abp { margin-left: 22px; }
.abp text { font: bold 11px "Liberation Sans", sans-serif; letter-spacing: 0; fill: #fff; }
.puz { margin-left: 24px; }
.tb-sep { width: 2px; height: 20px; background: #363636; margin-left: 22px; }
.dl { margin-left: 22px; }
.avatar { width: 41px; height: 41px; border-radius: 50%; background: #363636; display: flex; align-items: center; justify-content: center; margin-left: 14px; }
.avatar b { width: 25px; height: 25px; border-radius: 50%; background: #5c6bc0; color: #fff; font-weight: 400; font-size: 14px; line-height: 25px; text-align: center; }
.menu { margin-left: 22px; }

.bookmarks { height: 43px; display: grid; grid-template-columns: 194px 192px 193px 192px 87px 84px 193px 1fr 2px 161px; align-items: center; padding: 0 0 9px 15px; background: linear-gradient(#474747, #414141); }
.bm { display: flex; align-items: center; gap: 7px; }
.bm-wide { letter-spacing: 0; }
.bm-sep { height: 19px; background: #393939; }
.bm.all { padding-left: 20px; gap: 10px; }

/* report page */
.decoration { height: 3px; flex: none; background: linear-gradient(90deg, #ff4b4b, #fffd80); }
.app { position: relative; flex: none; height: 866px; display: flex; overflow: hidden; }
.sidebar { width: 527px; background: #262730; padding: 149px 47px 0 38px; font-size: 22.300px; }
.sidebar h2 { font-size: 33.600px; line-height: 45px; font-weight: 600; height: 90px; letter-spacing: -.48px; margin-left: -1px; }
.emo-title { display: inline-block; vertical-align: -6px; margin-left: 6px; }
.lbl { display: flex; align-items: center; gap: 8px; height: 24px; line-height: 24px; margin-top: 32px; font-size: 19.600px; }
.lbl .t { margin-left: -.5px; }
.dropzone { margin-top: 14px; height: 211px; border-radius: 12px; background: #0e1117; padding: 29px 25px 0; }
.dz-main { line-height: 30px; height: 30px; }
.dz-sub { line-height: 24px; height: 24px; margin-top: 13px; font-size: 19.600px; color: #94969a; }
.dz-main .t, .dz-sub .t { margin-left: -.7px; }
.btn { display: flex; align-items: center; height: 63px; border: 1px solid #53545c; border-radius: 12px; background: #2b2c36; line-height: 30px; }
.btn .t { margin-top: -2px; }
.browse { width: 164px; margin-top: 27px; padding-left: 18px; }
.file { display: flex; margin-top: 18px; height: 63px; padding: 0 31px 0 37px; }
.file-ico { margin-top: 9.500px; }
.file-meta { margin-left: 38px; }
.f1 { line-height: 30px; }
.f2 { line-height: 24px; margin-top: 8.500px; font-size: 19.600px; color: #97989d; }
.file-x { margin: 22px 0 0 auto; }
.lbl2 { margin-top: 46px; }
.select { margin-top: 14px; height: 62px; border-radius: 12px; background: #0e1117; display: flex; align-items: center; justify-content: space-between; padding: 0 24px 0 16px; }
.select .t { margin-top: -3px; }
.show { margin-top: 25px; width: 227px; padding-left: 18px; gap: 9px; color: #ff4b4b; border-color: #ff4b4b; }

.main { flex: 1; padding-left: 142px; }
.topbar { height: 76px; display: flex; justify-content: flex-end; padding: 41px 54px 0 0; line-height: 24px; font-size: 19.600px; gap: 41px; }
.topbar svg { margin-top: 2px; }
h1 { line-height: 82px; height: 82px; font-size: 61.400px; font-weight: 700; letter-spacing: -.1px; }
.cols { margin-top: 26px; display: flex; gap: 25px; }
.chart text { font: 12.300px "DejaVu Sans", sans-serif; fill: #1c1c1c; }
.chart .ct { font-size: 14.800px; }
.tofu { font-size: 14.900px; }

.df { position: relative; width: 538px; height: 625px; overflow: hidden; border: 1px solid #26282d; border-radius: 12px; font-size: 19.600px; }
.row { display: grid; grid-template-columns: 79.500px 389px 200px; height: 54.690px; border-bottom: 1.500px solid #26282d; line-height: 50px; }
.row.head { height: 56px; line-height: 54px; background: #1a1c24; color: #94969b; }
.row span { white-space: nowrap; border-right: 1.500px solid #26282d; padding-left: 12px; }
.row span:nth-child(2) { display: flex; align-items: center; padding-bottom: 2px; }
.row.head span:nth-child(2) { padding-bottom: 0; }
.row span:first-child { text-align: right; padding: 0 14px 0 0; color: #83858a; }
.row:not(.head) span:last-child { padding: 0; width: 70px; border: 0; text-align: right; }
.jp { font-style: normal; font-size: 21.900px; font-weight: 300; line-height: 1; }
.crown { margin-left: 9px; margin-top: 4px; }
.nazar { margin-left: 9px; }
.cool { margin-left: 3px; margin-top: -1px; }
.corner { position: absolute; right: 0; bottom: 0; width: 9px; height: 9px; background: #fff; }
.df2 { margin-top: 36px; width: 264px; height: 60px; border: 1px solid #26282d; border-radius: 12px 12px 0 0; display: flex; overflow: hidden; }
.df2 span { background: #1a1c24; border-right: 1.500px solid #2b2d34; width: 80px; }
.df2 span:nth-child(2) { width: 106px; }
.df2 span:nth-child(3) { width: 67px; border: 0; }

/* floating extension buttons */
.float { position: absolute; background: #f8f8f8; display: flex; align-items: center; justify-content: center; }
.f-tr { left: 1856px; top: 640px; width: 58px; height: 59px; border-radius: 50%; }
.f-bk { left: 1856px; top: 708px; width: 58px; height: 58px; border-radius: 50%; }
.f-br { left: 1844px; top: 779px; width: 74px; height: 70px; border-radius: 35px 0 0 35px; padding-left: 8px; }

/* taskbar */
.taskbar { flex: none; height: 58px; border-top: 1px solid #4a4a4a; display: flex; align-items: flex-start; padding-left: 462px; background: linear-gradient(90deg, #222327 0, #222327 760px, #2e2314 930px, #2c2317 1000px, #232323 1180px, #242424 100%); font-family: "Open Sans", sans-serif; }
.slot { position: relative; width: 55px; height: 57px; display: flex; align-items: center; justify-content: center; padding-bottom: 1px; }
.run::after, .tile::after { content: ""; position: absolute; bottom: 3px; left: 23.500px; width: 8px; height: 4px; border-radius: 2px; background: #9a9a9a; }
.tile svg { background: #313234; border: 1px solid #3a3b3d; border-radius: 5px; }
.tile::after { width: 20px; left: 17.500px; background: #cbbd8e; }
.badge-s { font: bold 12px "Liberation Sans", sans-serif; fill: #c3c8ea; }
.badge-2 { font: 16px "Open Sans", sans-serif; fill: #111; }
.todo { margin: -6px 0 0 5px; }
.search { width: 273px; height: 38px; margin: 10px 3px 0 5px; border-radius: 19px; background: #f2f2f2; display: flex; align-items: center; padding: 0 9px 0 14px; color: #5a5a5a; font-size: 17px; }
.srch { margin-left: 12px; letter-spacing: -.4px; }
.bird { margin-left: auto; margin-top: 2px; }
.tray { margin-left: auto; display: flex; height: 57px; align-items: center; font-size: 14.500px; line-height: 20px; color: #fff; padding-right: 25px; }
.t-ch { margin-right: 26px; }
.lang { display: flex; flex-direction: column; align-items: center; width: 30px; margin: 0 22px 0 26px; }
.t-wifi { margin-right: 10px; }
.t-snd { margin-right: 10px; }
.clock { display: flex; flex-direction: column; align-items: flex-end; width: 78px; margin: 0 11px 0 19px; letter-spacing: .1px; }
```
